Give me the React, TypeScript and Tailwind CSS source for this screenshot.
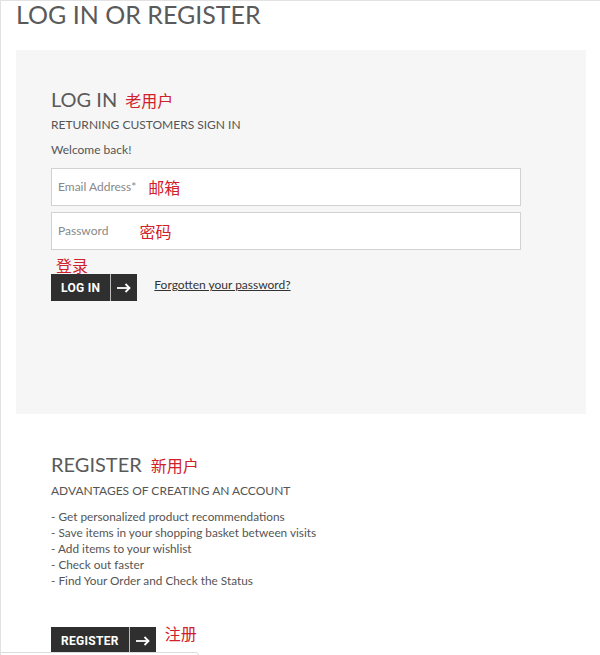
import React from "react";

const Arrow = () => (
  <svg width="14" height="10" viewBox="0 0 14 10" fill="none" stroke="white" strokeWidth="1.8">
    <path d="M0 5h12.5" />
    <path d="M8.5 1l4 4-4 4" />
  </svg>
);

const DarkButton = ({ label }: { label: string }) => (
  <div className="flex h-[27px] bg-[#2f2f2f] text-white">
    <span className="flex items-center px-[10px] font-['Roboto',sans-serif] text-[12px] font-bold tracking-[0.3px]">
      {label}
    </span>
    <span className="flex w-[27px] items-center justify-center border-l border-[#bdbdbd]">
      <Arrow />
    </span>
  </div>
);

const Field = ({ label, note, gap }: { label: string; note: string; gap: string }) => (
  <div className="flex h-[38px] w-[470px] items-center border border-[#d2d2d2] bg-white pl-[6px]">
    <span className="text-[12px] text-[#888]">{label}</span>
    <span className={`${gap} font-['Noto_Sans_CJK_SC',sans-serif] text-[16px] text-[#d0202a]`}>{note}</span>
  </div>
);

export default function App() {
  return (
    <div className="min-h-screen border-l border-t border-[#e2e2e2] bg-white font-['Lato',sans-serif] text-[#555]">
      <h1 className="mb-[23px] pl-[15px] text-[25px] leading-[26px] text-[#5a5a5a]">LOG IN OR REGISTER</h1>

      <div className="ml-[15px] h-[364px] w-[570px] bg-[#f6f6f6] px-[35px] pt-[37px]">
        <div className="flex items-baseline leading-[24px]">
          <h2 className="text-[20px] text-[#5a5a5a]">LOG IN</h2>
          <span className="ml-[8px] font-['Noto_Sans_CJK_SC',sans-serif] text-[16px] text-[#d0202a]">老用户</span>
        </div>
        <p className="mt-[5px] text-[12px] leading-[16px]">RETURNING CUSTOMERS SIGN IN</p>
        <p className="mt-[9px] text-[12px] leading-[16px]">Welcome back!</p>

        <div className="mt-[10px] flex flex-col gap-[6px]">
          <Field label="Email Address*" note="邮箱" gap="ml-[12px]" />
          <Field label="Password" note="密码" gap="ml-[31px]" />
        </div>

        <div className="h-[24px] pl-[5px] font-['Noto_Sans_CJK_SC',sans-serif] text-[16px] leading-[30px] text-[#d0202a]">登录</div>

        <div className="flex items-center gap-[17px]">
          <DarkButton label="LOG IN" />
          <a className="-mt-[5px] text-[12px] text-[#333] underline">Forgotten your password?</a>
        </div>
      </div>

      <div className="px-[50px] pt-[38px]">
        <div className="flex items-baseline leading-[24px]">
          <h2 className="text-[20px] text-[#5a5a5a]">REGISTER</h2>
          <span className="ml-[9px] font-['Noto_Sans_CJK_SC',sans-serif] text-[16px] text-[#d0202a]">新用户</span>
        </div>
        <p className="mt-[6px] text-[12px] leading-[16px]">ADVANTAGES OF CREATING AN ACCOUNT</p>
        <ul className="mt-[10px] text-[11.8px] leading-[16px]">
          <li>- Get personalized product recommendations</li>
          <li>- Save items in your shopping basket between visits</li>
          <li>- Add items to your wishlist</li>
          <li>- Check out faster</li>
          <li>- Find Your Order and Check the Status</li>
        </ul>
        <div className="mt-[38px] flex items-start gap-[9px]">
          <DarkButton label="REGISTER" />
          <span className="-mt-[6px] font-['Noto_Sans_CJK_SC',sans-serif] text-[16px] text-[#d0202a]">注册</span>
        </div>
      </div>

      <div className="fixed bottom-[-20px] left-0 h-[23px] w-[199px] rounded-tr-[3px] border border-[#dcdcdc] bg-white" />
    </div>
  );
}
